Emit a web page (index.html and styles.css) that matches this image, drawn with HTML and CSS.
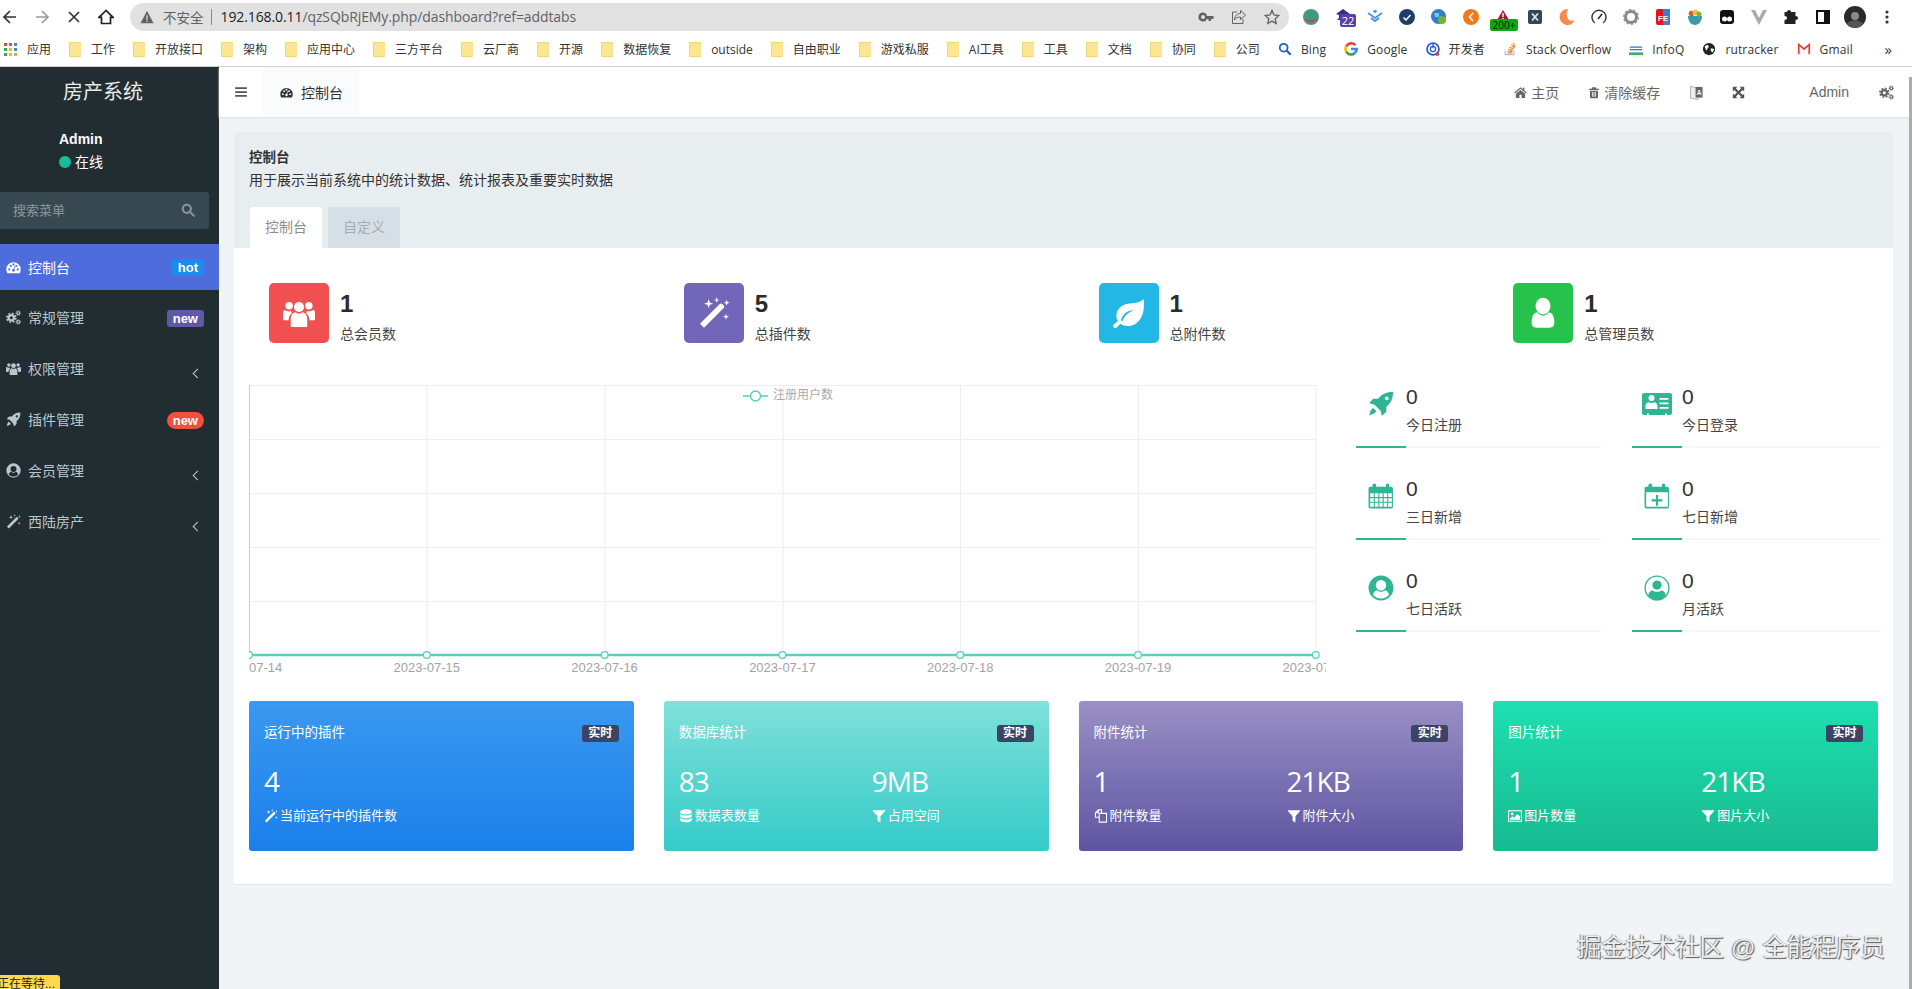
FILE: index.html
```html
<!DOCTYPE html>
<html lang="zh-CN">
<head>
    <meta charset="UTF-8">
    <meta name="viewport" content="width=device-width, initial-scale=1.0">
    <title>房产系统 - 控制台</title>
    <link rel="stylesheet" href="styles.css">
</head>
<body>
    <!-- icon sprite -->
    <svg class="sprite" xmlns="http://www.w3.org/2000/svg">
        <symbol id="i-dash" viewBox="0 0 24 24"><path fill-rule="evenodd" d="M12 3.5A11.5 11.5 0 0 0 .5 15c0 2.2.6 4.2 1.6 6h19.8a11.5 11.5 0 0 0 1.6-6A11.5 11.5 0 0 0 12 3.5zM3.5 15a1.7 1.7 0 1 0 3.4 0 1.7 1.7 0 1 0-3.4 0zM5.8 9.5a1.7 1.7 0 1 0 3.4 0 1.7 1.7 0 1 0-3.4 0zM10.3 7a1.7 1.7 0 1 0 3.4 0 1.7 1.7 0 1 0-3.4 0zM14.8 9.5a1.7 1.7 0 1 0 3.4 0 1.7 1.7 0 1 0-3.4 0zM17.1 15a1.7 1.7 0 1 0 3.4 0 1.7 1.7 0 1 0-3.4 0zM9.7 16.5a2.3 2.3 0 0 0 4.6 0c0-.8-.4-1.5-1-1.9L15 9.5l-.7-.2-2.4 4.9a2.3 2.3 0 0 0-2.2 2.3z"/></symbol>
        <symbol id="i-cogs" viewBox="0 0 24 24"><g fill="none" stroke="currentColor"><circle cx="8.5" cy="12.5" r="4.2" stroke-width="3.6"/><circle cx="8.5" cy="12.5" r="7" stroke-width="2.8" stroke-dasharray="2.9 2.6"/><circle cx="19.5" cy="5" r="2.2" stroke-width="1.8"/><circle cx="19.5" cy="5" r="3.6" stroke-width="1.6" stroke-dasharray="1.4 1.43"/><circle cx="19.5" cy="19" r="2.2" stroke-width="1.8"/><circle cx="19.5" cy="19" r="3.6" stroke-width="1.6" stroke-dasharray="1.4 1.43"/></g></symbol>
        <symbol id="i-users" viewBox="0 0 24 24"><circle cx="12" cy="7.5" r="3.8"/><circle cx="4.6" cy="6.5" r="2.8"/><circle cx="19.4" cy="6.5" r="2.8"/><path d="M5.8 21.5v-4.5c0-3.3 1.7-5.3 3.5-5.5.7.6 1.7 1 2.7 1s2-.4 2.7-1c1.8.2 3.5 2.2 3.5 5.5v4.5c0 .6-.5 1-1 1H6.8c-.5 0-1-.4-1-1z"/><path d="M0 11.5c0-1 .6-1.8 1.5-1.8.8.7 1.9 1.1 3 1.1.6 0 1.2-.1 1.7-.3-.2.8.1 1.3.5 1.7-1.5 1-2.5 3-2.5 5.3H1c-.6 0-1-.4-1-1z"/><path d="M24 11.5c0-1-.6-1.8-1.5-1.8-.8.7-1.9 1.1-3 1.1-.6 0-1.2-.1-1.7-.3.2.8-.1 1.3-.5 1.7 1.5 1 2.5 3 2.5 5.3H23c.6 0 1-.4 1-1z"/></symbol>
        <symbol id="i-rocket" viewBox="0 0 24 24"><path fill-rule="evenodd" d="M23 1c-5.5-.3-10.2 1.7-13.7 6.2H4.8L1 11.3l4.7 1.1 5.9 5.9 1.2 4.7 4.1-3.800v-4.500C21.300 11.200 23.300 6.500 23 1zM15.500 6.800a1.800 1.800 0 1 0 3.600 0 1.800 1.800 0 1 0-3.600 0z"/><path d="M4.700 15.700c-1.700 1-2.900 3.200-3.500 6.600 3.400-.6 5.600-1.800 6.600-3.500z"/></symbol>
        <symbol id="i-ucircle" viewBox="0 0 24 24"><path fill-rule="evenodd" d="M12 .5a11.500 11.500 0 1 0 0 23 11.500 11.500 0 0 0 0-23zM7.200 9.500a4.800 4.800 0 1 0 9.600 0 4.800 4.800 0 1 0-9.600 0zM4.500 18.300c.6-2.400 2-3.900 3.700-4.300 1 .9 2.400 1.400 3.800 1.400s2.800-.5 3.800-1.400c1.700.4 3.100 1.900 3.700 4.300-1.800 2.100-4.500 3.400-7.500 3.400s-5.700-1.300-7.500-3.400z"/></symbol>
        <symbol id="i-uring" viewBox="0 0 24 24"><circle cx="12" cy="12" r="11" fill="none" stroke="currentColor" stroke-width="1.2"/><circle cx="12" cy="9.3" r="4.3"/><path d="M3.800 18.700c.6-2.600 2-4.200 4-4.700 1 1 2.600 1.500 4.200 1.500s3.200-.5 4.200-1.500c2 .5 3.400 2.100 4 4.700-1.900 2.800-4.900 4.500-8.200 4.500s-6.300-1.700-8.200-4.500z"/></symbol>
        <symbol id="i-magic" viewBox="0 0 24 24"><path d="M4.500 23 1.500 20 16.300 5.200c.5-.5 1.300-.5 1.800 0l1.200 1.200c.5.500.5 1.300 0 1.800z"/><path d="M8 1.500l.8 2.700 2.700.8-2.700.8L8 8.500l-.8-2.700L4.500 5l2.700-.8zM14 0l.5 1.800 1.500.5-1.500.5-.5 1.700-.5-1.700-1.500-.5 1.500-.5zM21.500 2l.6 1.700 1.700.6-1.700.6-.6 1.600-.6-1.600-1.700-.6 1.700-.6zM21 12.500l.6 1.700 1.700.6-1.700.6-.6 1.600-.6-1.600-1.700-.6 1.700-.6z"/></symbol>
        <symbol id="i-search" viewBox="0 0 24 24"><circle cx="10" cy="10" r="7" fill="none" stroke="currentColor" stroke-width="3.4"/><path d="M15 17.500l2.500-2.500 6 6c.6.700.6 1.700 0 2.300-.7.600-1.700.6-2.300 0z"/></symbol>
        <symbol id="i-home" viewBox="0 0 24 24"><path d="M12 2.500.5 12l1.400 1.700L12 5.300l10.100 8.400 1.400-1.700-4.500-3.700V3h-3v3z"/><path d="M12 7.300 3.500 14.300V21c0 .6.400 1 1 1h5.500v-6h4v6h5.500c.6 0 1-.4 1-1v-6.700z"/></symbol>
        <symbol id="i-trash" viewBox="0 0 24 24"><path fill-rule="evenodd" d="M8.500 1.500h7l1.400 3H21c.6 0 1 .4 1 1v1.500H2V5.500c0-.6.400-1 1-1h4.100zM4 8.500h16V21c0 1.400-1 2.500-2.200 2.500H6.200C5 23.500 4 22.400 4 21zM8 11v9.500h1.500V11zM11.200 11v9.500h1.600V11zM14.500 11v9.500H16V11z"/></symbol>
        <symbol id="i-expand" viewBox="0 0 24 24"><path d="M1.500 1.500h8.500L7.200 4.300 12 9.100l4.800-4.800L14 1.500h8.500V10l-2.800-2.800L14.900 12l4.800 4.800 2.800-2.800v8.500H14l2.800-2.800L12 14.900l-4.800 4.800L10 22.500H1.500V14l2.800 2.800L9.100 12 4.300 7.200 1.500 10z"/></symbol>
        <symbol id="i-bars" viewBox="0 0 24 24"><path d="M2 4h20v3H2zM2 10.500h20v3H2zM2 17h20v3H2z"/></symbol>
        <symbol id="i-db" viewBox="0 0 24 24"><ellipse cx="12" cy="5" rx="10" ry="4.500"/><path d="M2 8c1.500 2 5.500 3 10 3s8.500-1 10-3v4c0 2.300-4.500 4-10 4S2 14.300 2 12z"/><path d="M2 15c1.500 2 5.500 3 10 3s8.500-1 10-3v4c0 2.300-4.500 4-10 4S2 21.300 2 19z"/></symbol>
        <symbol id="i-filter" viewBox="0 0 24 24"><path d="M1.500 2h21v1.500l-8 9V23l-5-3v-7.500l-8-9z"/></symbol>
        <symbol id="i-files" viewBox="0 0 24 24"><path fill="none" stroke="currentColor" stroke-width="1.800" d="M9 14H2.500V6.500L7.500 1.500H13V7M9 7.500h5.500L21.500 7.500V22.500H9z"/><path fill="none" stroke="currentColor" stroke-width="1.800" d="M7.500 1.500v5h-5"/></symbol>
        <symbol id="i-pic" viewBox="0 0 24 24"><rect x="1" y="3" width="22" height="18" fill="none" stroke="currentColor" stroke-width="1.800"/><circle cx="7" cy="8.500" r="2.300"/><path d="M3.500 18.500v-2.500l4-3.500 2.500 2.500 6-6.500 4.500 4.500v5.500z"/></symbol>
        <symbol id="i-leaf" viewBox="0 0 24 24"><path fill-rule="evenodd" d="M23 1.500c.5 6.500.5 14-6 18.500-4 2.500-8.500 2-11.500 0L2.800 22.800c-.6.600-1.600.6-2.200 0-.6-.6-.6-1.600 0-2.200L3.700 18C1.500 14.500 2.500 9 7 6.500c5-2.800 12-.7 16-5zM6 17.400l1 1c1.500-4.500 4.500-7 9-8.400-5-.2-8.700 2.500-10 7.400z"/></symbol>
        <symbol id="i-user" viewBox="0 0 24 24"><ellipse cx="12" cy="6.800" rx="5.600" ry="6.300"/><path d="M3.500 19.500c0-4.500 1.300-7.500 4-8 1 1.400 2.700 2.500 4.500 2.500s3.500-1.100 4.500-2.500c2.700.5 4 3.500 4 8 0 2.200-1.300 3.500-3.500 3.500H7c-2.200 0-3.500-1.300-3.500-3.500z"/></symbol>
        <symbol id="i-cal" viewBox="0 0 24 24"><path fill-rule="evenodd" d="M6 .5c.8 0 1.500.7 1.500 1.500v1.500h9V2c0-.8.700-1.500 1.500-1.500s1.500.7 1.500 1.500v1.500h2c.8 0 1.500.7 1.500 1.500v17c0 .8-.7 1.500-1.500 1.500H2c-.8 0-1.500-.7-1.500-1.500V5c0-.8.700-1.500 1.500-1.500h2V2C4.500 1.200 5.200.5 6 .5zM2 9.500V13h3.300V9.500zM6.300 9.500V13h3.200V9.500zM10.500 9.500V13h3V9.500zM14.500 9.500V13h3.200V9.500zM18.700 9.500V13H22V9.500zM2 14v3.300h3.300V14zM6.300 14v3.300h3.200V14zM10.500 14v3.300h3V14zM14.500 14v3.300h3.200V14zM18.700 14v3.300H22V14zM2 18.300V22h3.300v-3.700zM6.300 18.300V22h3.200v-3.700zM10.500 18.300V22h3v-3.700zM14.500 18.300V22h3.200v-3.700zM18.700 18.300V22H22v-3.700z"/></symbol>
        <symbol id="i-calplus" viewBox="0 0 24 24"><path fill-rule="evenodd" d="M6 .5c.8 0 1.500.7 1.500 1.500v1.500h9V2c0-.8.700-1.500 1.500-1.500s1.500.7 1.500 1.500v1.500h2c.8 0 1.500.7 1.500 1.500v17c0 .8-.7 1.500-1.500 1.500H2c-.8 0-1.500-.7-1.500-1.500V5c0-.8.700-1.500 1.500-1.500h2V2C4.500 1.200 5.200.5 6 .5zM2 8.500V22h20V8.500z"/><path d="M11 11h2v4h4v2h-4v4h-2v-4H7v-2h4z"/></symbol>
        <symbol id="i-idcard" viewBox="0 0 30 24"><path fill-rule="evenodd" d="M2 1h26c1 0 2 1 2 2v18c0 1-1 2-2 2h-3v-1.500h-2V23H7v-1.500H5V23H2c-1 0-2-1-2-2V3c0-1 1-2 2-2zM6.500 6a3 3 0 1 0 6 0 3 3 0 1 0-6 0zM3.500 17h12v-2.500c0-2.500-1.500-4-3-4.300-.8.600-1.800.8-3 .8s-2.200-.2-3-.8c-1.500.3-3 1.800-3 4.300zM17.500 6v1.800h9V6zM17.500 10.500v1.800h9v-1.800zM17.500 15v1.800h9V15z"/></symbol>
    </svg>

    <!-- browser toolbar -->
    <div class="toolbar">
        <div class="nav-btns">
            <svg viewBox="0 0 16 16" fill="none" stroke="#333" stroke-width="1.7"><path d="M14 8H2.500M8 2 2 8l6 6"/></svg>
            <svg viewBox="0 0 16 16" fill="none" stroke="#999" stroke-width="1.7"><path d="M2 8h11.500M8 2l6 6-6 6"/></svg>
            <svg viewBox="0 0 16 16" fill="none" stroke="#333" stroke-width="1.7"><path d="M3 3l10 10M13 3 3 13"/></svg>
            <svg viewBox="0 0 16 16" fill="none" stroke="#222" stroke-width="1.7"><path d="M8 1.500 1 8.300h2.500V14.500h9V8.300H15z"/></svg>
        </div>
        <div class="addr">
            <svg class="addr-warn" viewBox="0 0 16 16"><path fill="#5f6368" d="M8 1 .5 15h15z"/><path fill="#e0e0e0" d="M7.300 6h1.400v5H7.300zM7.300 12h1.400v1.400H7.300z"/></svg>
            <span class="addr-insecure">不安全</span>
            <span class="addr-sep"></span>
            <span class="addr-url"><b>192.168.0.11</b>/qzSQbRjEMy.php/dashboard?ref=addtabs</span>
            <span class="addr-tools">
                <svg viewBox="0 0 16 16" fill="#5f6368"><path fill-rule="evenodd" d="M5 3.500a4.500 4.500 0 1 0 4 6.500h1.500v2H13v-2h2.500V7H9a4.500 4.500 0 0 0-4-3.500zM3 8a2 2 0 1 0 4 0 2 2 0 1 0-4 0z"/></svg>
                <svg viewBox="0 0 16 16" fill="none" stroke="#5f6368" stroke-width="1"><path d="M6 3H1.500v11.500H12V10M9.500 1.500 14.500 6l-5 4.500V8C6.500 8 4.500 9 3.500 11c0-4 2.500-6.500 6-6.500z"/></svg>
                <svg viewBox="0 0 16 16" fill="none" stroke="#5f6368" stroke-width="1.3"><path d="M8 1.500l2 4.500 4.800.5-3.600 3.200 1 4.800L8 12.100l-4.200 2.400 1-4.800L1.200 6.500 6 6z"/></svg>
            </span>
        </div>
        <div class="exts">
            <svg viewBox="0 0 16 16"><circle cx="8" cy="8" r="8" fill="#5a8f7a"/><path fill="#2f9e8f" d="M3 3h10v5H3z"/><path fill="#a04f4a" d="M2 9c2 3 10 3 12 0-1 5-11 5-12 0z"/></svg>
            <span class="ext-wrap"><svg viewBox="0 0 16 16"><path fill="#3b2a8c" d="M8 0l7 5-3 1v3l2 2H2l2-2V6L1 5z"/></svg><span class="ext-badge ext-badge-purple">22</span></span>
            <svg viewBox="0 0 16 16" fill="none" stroke="#4a90e2" stroke-width="1.8"><path d="M1 4l7 5 7-5M4 9l4 3 4-3M6.500 1.500 8 3l1.500-1.500"/></svg>
            <svg viewBox="0 0 16 16"><circle cx="8" cy="8" r="8" fill="#1d3f66"/><path fill="none" stroke="#fff" stroke-width="1.5" d="M4.500 8.500l2.500 2.500 4.500-5"/></svg>
            <svg viewBox="0 0 16 16"><circle cx="7.500" cy="7.500" r="7.500" fill="#2f80c8"/><circle cx="11" cy="11" r="4" fill="#6db33f"/><path fill="#7ec2ea" d="M3 4h5v4H4z"/></svg>
            <svg viewBox="0 0 16 16"><circle cx="8" cy="8" r="8" fill="#f07a1a"/><path fill="none" stroke="#fff" stroke-width="1.5" d="M10 4 6.500 8 10 12"/></svg>
            <span class="ext-wrap"><svg viewBox="0 0 16 16"><path fill="#a61c2e" d="M8 1l6 10H2z"/><path fill="#fff" d="M7.300 4h1.400v4H7.300zM7.300 9h1.400v1.300H7.300z"/></svg><span class="ext-badge ext-badge-green">200+</span></span>
            <svg viewBox="0 0 16 16"><rect x="1" y="1" width="14" height="14" rx="2" fill="#37474f"/><path fill="none" stroke="#dfe6e9" stroke-width="1.8" d="M5 4.500l6 7M11 4.500l-6 7"/></svg>
            <svg viewBox="0 0 16 16"><path fill="#f58a4b" d="M9 0A8 8 0 1 0 16 11C11 14 5 9 9 0z"/></svg>
            <svg viewBox="0 0 16 16" fill="none" stroke="#333" stroke-width="1.4"><path d="M4 14A7 7 0 1 1 12 14"/><path stroke-width="1.8" d="M7 10l4-5"/></svg>
            <svg viewBox="0 0 16 16"><circle cx="8" cy="8" r="5.500" fill="none" stroke="#888" stroke-width="3"/><circle cx="8" cy="8" r="7.200" fill="none" stroke="#999" stroke-width="1.6" stroke-dasharray="2.5 2"/></svg>
            <svg viewBox="0 0 16 16"><rect x="1" width="14" height="16" rx="2" fill="#e0161c"/><rect x="8" y="0" width="7" height="16" rx="1" fill="#3a7bd5"/><text class="ext-fe" x="8" y="11.500" text-anchor="middle">FE</text></svg>
            <svg viewBox="0 0 16 16"><path fill="#3c9aa8" d="M1 7h14c0 5-3 9-7 9s-7-4-7-9z"/><circle cx="4.500" cy="4.500" r="2.800" fill="#d8553f"/><circle cx="8.500" cy="3.500" r="3" fill="#f2c230"/><circle cx="12" cy="5" r="2.500" fill="#7cb342"/></svg>
            <svg viewBox="0 0 16 16"><rect x="1" y="1" width="14" height="14" rx="3" fill="#111"/><circle cx="5.500" cy="10" r="2.500" fill="#fff"/><circle cx="10.500" cy="10" r="2.500" fill="#fff"/></svg>
            <svg viewBox="0 0 16 16"><path fill="#aaa" d="M0 1h4l4 8 4-8h4L8 16z"/></svg>
            <svg viewBox="0 0 16 16"><path fill="#222" d="M6 1c1.300 0 2 1 2 2h4.500v4c1.500 0 2.500.8 2.500 2s-1 2-2.500 2v4H1.500v-4c1.500 0 2.500-.8 2.500-2S3 7 1.500 7V3H4c0-1 .7-2 2-2z"/></svg>
            <svg viewBox="0 0 16 16"><path fill-rule="evenodd" fill="#111" d="M1 1h14v14H1zM3 3v10h6V3z"/></svg>
            <svg viewBox="0 0 22 22" class="ext-avatar"><circle cx="11" cy="11" r="11" fill="#2a2a2a"/><circle cx="11" cy="10" r="4" fill="#8a8a8a"/><path fill="#555" d="M3 18c3-5 13-5 16 0-4 5-12 5-16 0z"/></svg>
            <svg viewBox="0 0 16 16" fill="#333"><circle cx="8" cy="3" r="1.600"/><circle cx="8" cy="8" r="1.600"/><circle cx="8" cy="13" r="1.600"/></svg>
        </div>
    </div>

    <!-- bookmarks bar -->
    <div class="bookmarks">
        <a class="bm"><svg class="bm-apps" viewBox="0 0 13 13"><path fill="#e8453c" d="M0 0h3v3H0z"/><path fill="#e8453c" d="M5 0h3v3H5z"/><path fill="#4285f4" d="M10 0h3v3h-3z"/><path fill="#34a853" d="M0 5h3v3H0z"/><path fill="#fbbc05" d="M5 5h3v3H5z"/><path fill="#4285f4" d="M10 5h3v3h-3z"/><path fill="#34a853" d="M0 10h3v3H0z"/><path fill="#fbbc05" d="M5 10h3v3H5z"/><path fill="#e8a33c" d="M10 10h3v3h-3z"/></svg>应用</a>
        <a class="bm"><i class="folder"></i>工作</a>
        <a class="bm"><i class="folder"></i>开放接口</a>
        <a class="bm"><i class="folder"></i>架构</a>
        <a class="bm"><i class="folder"></i>应用中心</a>
        <a class="bm"><i class="folder"></i>三方平台</a>
        <a class="bm"><i class="folder"></i>云厂商</a>
        <a class="bm"><i class="folder"></i>开源</a>
        <a class="bm"><i class="folder"></i>数据恢复</a>
        <a class="bm"><i class="folder"></i>outside</a>
        <a class="bm"><i class="folder"></i>自由职业</a>
        <a class="bm"><i class="folder"></i>游戏私服</a>
        <a class="bm"><i class="folder"></i>AI工具</a>
        <a class="bm"><i class="folder"></i>工具</a>
        <a class="bm"><i class="folder"></i>文档</a>
        <a class="bm"><i class="folder"></i>协同</a>
        <a class="bm"><i class="folder"></i>公司</a>
        <a class="bm bm-site"><svg viewBox="0 0 16 16"><circle cx="6.500" cy="6.500" r="4.500" fill="none" stroke="#1a5fc4" stroke-width="2"/><path stroke="#1a5fc4" stroke-width="2.4" d="M10 10l4.500 4.500"/></svg>Bing</a>
        <a class="bm bm-site"><svg viewBox="0 0 16 16" fill="none" stroke-width="3"><path stroke="#ea4335" d="M13 3.500A6.500 6.500 0 0 0 2.500 5"/><path stroke="#fbbc05" d="M2.500 5a6.500 6.500 0 0 0 0 6"/><path stroke="#34a853" d="M2.500 11a6.500 6.500 0 0 0 10 1.500"/><path stroke="#4285f4" d="M12.500 12.500c1.200-1 1.800-2.500 2-4.500H8"/></svg>Google</a>
        <a class="bm bm-site"><svg viewBox="0 0 16 16"><circle cx="8" cy="8" r="6.800" fill="none" stroke="#2a5bd7" stroke-width="2"/><circle cx="8" cy="8" r="3" fill="none" stroke="#2a5bd7" stroke-width="1.5"/><path stroke="#2a5bd7" stroke-width="1.5" d="M8 1v6"/><circle cx="13" cy="14" r="2" fill="#e53935"/></svg>开发者</a>
        <a class="bm bm-site"><svg viewBox="0 0 16 16" fill="none" stroke="#e8893a" stroke-width="1.4"><path stroke="#bcbbbb" d="M2.500 10v4.500h10V10"/><path d="M5 12.500h5.500M5.200 10.300l5.400.7M6 8l5 1.800M7.500 5.500l4.300 3M9.800 3l3 4.200M12.300 1l1 5"/></svg>Stack Overflow</a>
        <a class="bm bm-site"><svg viewBox="0 0 16 16"><path fill="#1b7fcc" d="M0 12h16v1.500H0z"/><path fill="#3eb34f" d="M0 13.500h16V15H0z"/><path fill="#1b7fcc" d="M1 5h14v1.500H1zM1 8h14v1.500H1z"/></svg>InfoQ</a>
        <a class="bm bm-site"><svg viewBox="0 0 16 16"><circle cx="8" cy="8" r="7" fill="#222"/><path fill="#fff" d="M3 5l3-2 2 2-2 3-1 2zM10 7l4 1-2 4-2-2z"/></svg>rutracker</a>
        <a class="bm bm-site"><svg viewBox="0 0 16 16" fill="none" stroke-width="2"><path stroke="#ea4335" d="M2 14V3l6 5 6-5v11"/></svg>Gmail</a>
        <span class="bm-more">»</span>
    </div>

    <div class="app">
        <aside class="sidebar">
            <div class="brand">房产系统</div>
            <div class="user-panel">
                <div class="user-name">Admin</div>
                <div class="user-state"><i class="dot"></i>在线</div>
            </div>
            <div class="side-search">
                <span>搜索菜单</span>
                <svg class="ico"><use href="#i-search"/></svg>
            </div>
            <ul class="menu">
                <li class="menu-item active"><svg class="ico"><use href="#i-dash"/></svg><span class="menu-text">控制台</span><span class="tag tag-blue">hot</span></li>
                <li class="menu-item"><svg class="ico"><use href="#i-cogs"/></svg><span class="menu-text">常规管理</span><span class="tag tag-purple">new</span></li>
                <li class="menu-item"><svg class="ico"><use href="#i-users"/></svg><span class="menu-text">权限管理</span><i class="chev"></i></li>
                <li class="menu-item"><svg class="ico"><use href="#i-rocket"/></svg><span class="menu-text">插件管理</span><span class="tag tag-red">new</span></li>
                <li class="menu-item"><svg class="ico"><use href="#i-ucircle"/></svg><span class="menu-text">会员管理</span><i class="chev"></i></li>
                <li class="menu-item"><svg class="ico"><use href="#i-magic"/></svg><span class="menu-text">西陆房产</span><i class="chev"></i></li>
            </ul>
        </aside>

        <main class="main">
            <header class="topbar">
                <svg class="top-bars"><use href="#i-bars"/></svg>
                <div class="top-tab"><svg class="ico"><use href="#i-dash"/></svg>控制台</div>
                <div class="top-right">
                    <a class="top-link top-home"><svg class="ico"><use href="#i-home"/></svg>主页</a>
                    <a class="top-link top-cache"><svg class="ico"><use href="#i-trash"/></svg>清除缓存</a>
                    <svg class="top-lang" viewBox="0 0 14 16"><path fill="#eee" stroke="#999" stroke-width=".8" d="M.5 1.500l8 1.500v12.500l-8-1.500z"/><path fill="#666" d="M6 2h7.500v11.500H6z"/><text class="lang-a" x="9.800" y="10.500" text-anchor="middle">A</text></svg>
                    <svg class="top-expand"><use href="#i-expand"/></svg>
                    <a class="top-admin">Admin</a>
                    <svg class="top-cogs"><use href="#i-cogs"/></svg>
                </div>
            </header>

            <div class="content">
                <section class="panel">
                    <div class="panel-heading">
                        <div class="panel-title">控制台</div>
                        <div class="panel-desc">用于展示当前系统中的统计数据、统计报表及重要实时数据</div>
                        <div class="tabs">
                            <span class="tab active">控制台</span>
                            <span class="tab">自定义</span>
                        </div>
                    </div>
                    <div class="panel-body">
                        <div class="stat-row">
                            <div class="stat">
                                <div class="stat-icon bg-red"><svg><use href="#i-users"/></svg></div>
                                <div><div class="stat-num">1</div><div class="stat-label">总会员数</div></div>
                            </div>
                            <div class="stat">
                                <div class="stat-icon bg-purple"><svg><use href="#i-magic"/></svg></div>
                                <div><div class="stat-num">5</div><div class="stat-label">总插件数</div></div>
                            </div>
                            <div class="stat">
                                <div class="stat-icon bg-sky"><svg><use href="#i-leaf"/></svg></div>
                                <div><div class="stat-num">1</div><div class="stat-label">总附件数</div></div>
                            </div>
                            <div class="stat">
                                <div class="stat-icon bg-green"><svg><use href="#i-user"/></svg></div>
                                <div><div class="stat-num">1</div><div class="stat-label">总管理员数</div></div>
                            </div>
                        </div>

                        <div class="mid-row">
                            <svg class="chart" width="1077" height="296" viewBox="0 0 1077 296">
                                <g stroke="#eeeeee" stroke-width="1">
                                    <path d="M0 .5H1067M0 54.500H1067M0 108.500H1067M0 162.500H1067M0 216.500H1067"/>
                                    <path d="M178 0V270M356 0V270M534 0V270M711.500 0V270M889.500 0V270M1067 0V270"/>
                                </g>
                                <path stroke="#cfcfcf" d="M.5 0V270"/>
                                <path stroke="#5cd0b8" stroke-width="2.5" d="M0 270H1067"/>
                                <g fill="#fff" stroke="#4fd2b8" stroke-width="1.2">
                                    <circle cx="0" cy="270" r="3.400"/><circle cx="177.800" cy="270" r="3.400"/><circle cx="355.600" cy="270" r="3.400"/><circle cx="533.400" cy="270" r="3.400"/><circle cx="711.200" cy="270" r="3.400"/><circle cx="889" cy="270" r="3.400"/><circle cx="1066.800" cy="270" r="3.400"/>
                                </g>
                                <g class="chart-labels" text-anchor="middle">
                                    <text x="0" y="287">2023-07-14</text><text x="177.800" y="287">2023-07-15</text><text x="355.600" y="287">2023-07-16</text><text x="533.400" y="287">2023-07-17</text><text x="711.200" y="287">2023-07-18</text><text x="889" y="287">2023-07-19</text><text x="1066.800" y="287">2023-07-20</text>
                                </g>
                                <path stroke="#4fd2b8" stroke-width="1.5" d="M494 11H519"/>
                                <circle cx="506.500" cy="11" r="5" fill="#fff" stroke="#4fd2b8" stroke-width="1.3"/>
                                <text class="chart-legend" x="524" y="13.500">注册用户数</text>
                            </svg>

                            <div class="mini-grid">
                                <div class="mini"><div class="mini-main"><svg class="mini-icon"><use href="#i-rocket"/></svg><div><div class="mini-num">0</div><div class="mini-label">今日注册</div></div></div><div class="track"><div class="track-fill"></div></div></div>
                                <div class="mini"><div class="mini-main"><svg class="mini-icon mini-icon-wide" viewBox="0 0 30 24"><use href="#i-idcard"/></svg><div><div class="mini-num">0</div><div class="mini-label">今日登录</div></div></div><div class="track"><div class="track-fill"></div></div></div>
                                <div class="mini"><div class="mini-main"><svg class="mini-icon"><use href="#i-cal"/></svg><div><div class="mini-num">0</div><div class="mini-label">三日新增</div></div></div><div class="track"><div class="track-fill"></div></div></div>
                                <div class="mini"><div class="mini-main"><svg class="mini-icon"><use href="#i-calplus"/></svg><div><div class="mini-num">0</div><div class="mini-label">七日新增</div></div></div><div class="track"><div class="track-fill"></div></div></div>
                                <div class="mini"><div class="mini-main"><svg class="mini-icon"><use href="#i-ucircle"/></svg><div><div class="mini-num">0</div><div class="mini-label">七日活跃</div></div></div><div class="track"><div class="track-fill"></div></div></div>
                                <div class="mini"><div class="mini-main"><svg class="mini-icon"><use href="#i-uring"/></svg><div><div class="mini-num">0</div><div class="mini-label">月活跃</div></div></div><div class="track"><div class="track-fill"></div></div></div>
                            </div>
                        </div>

                        <div class="card-row">
                            <div class="card card-blue">
                                <div class="card-head"><span>运行中的插件</span><span class="card-tag">实时</span></div>
                                <div class="card-cols">
                                    <div><div class="card-num">4</div><div class="card-sub"><svg class="ico"><use href="#i-magic"/></svg>当前运行中的插件数</div></div>
                                </div>
                            </div>
                            <div class="card card-teal">
                                <div class="card-head"><span>数据库统计</span><span class="card-tag">实时</span></div>
                                <div class="card-cols">
                                    <div><div class="card-num">83</div><div class="card-sub"><svg class="ico"><use href="#i-db"/></svg>数据表数量</div></div>
                                    <div><div class="card-num">9MB</div><div class="card-sub"><svg class="ico"><use href="#i-filter"/></svg>占用空间</div></div>
                                </div>
                            </div>
                            <div class="card card-violet">
                                <div class="card-head"><span>附件统计</span><span class="card-tag">实时</span></div>
                                <div class="card-cols">
                                    <div><div class="card-num">1</div><div class="card-sub"><svg class="ico"><use href="#i-files"/></svg>附件数量</div></div>
                                    <div><div class="card-num">21KB</div><div class="card-sub"><svg class="ico"><use href="#i-filter"/></svg>附件大小</div></div>
                                </div>
                            </div>
                            <div class="card card-mint">
                                <div class="card-head"><span>图片统计</span><span class="card-tag">实时</span></div>
                                <div class="card-cols">
                                    <div><div class="card-num">1</div><div class="card-sub"><svg class="ico"><use href="#i-pic"/></svg>图片数量</div></div>
                                    <div><div class="card-num">21KB</div><div class="card-sub"><svg class="ico"><use href="#i-filter"/></svg>图片大小</div></div>
                                </div>
                            </div>
                        </div>
                    </div>
                </section>
            </div>
        </main>
    </div>

    <div class="scroll-strip"></div>
    <div class="status-tip">正在等待...</div>
    <div class="watermark">掘金技术社区 @ 全能程序员</div>
</body>
</html>
```

FILE: styles.css
```css
* { box-sizing: border-box; }
html, body { margin: 0; height: 100%; }
body { position: relative; height: 989px; overflow: hidden; display: flex; flex-direction: column; background: #f1f4f6; color: #333; font-family: "Liberation Sans", "Noto Sans CJK SC", sans-serif; font-size: 14px; }
ul { list-style: none; margin: 0; padding: 0; }
.sprite { display: none; }
.ico { width: 14px; height: 14px; fill: currentColor; flex: none; }

/* browser chrome */
.toolbar { height: 33px; flex: none; display: flex; align-items: center; padding: 0 17px 0 2px; background: #fff; font-family: "Open Sans", "Noto Sans CJK SC", sans-serif; }
.nav-btns { display: flex; gap: 16px; flex: none; }
.nav-btns svg { width: 16px; height: 16px; }
.addr { flex: 1; height: 28px; margin: 0 14px 0 16px; padding: 0 9px 0 10px; display: flex; align-items: center; background: #e1e1e1; border-radius: 14px; font-size: 14px; color: #5f6368; }
.addr-warn { width: 14px; height: 14px; margin-right: 9px; }
.addr-insecure { font-size: 13.5px; }
.addr-sep { width: 1px; height: 16px; background: #8a8a8a; margin: 0 9px 0 7px; }
.addr-url { letter-spacing: -.1px; }
.addr-url b { font-weight: 400; color: #202124; }
.addr-tools { margin-left: auto; display: flex; gap: 17px; }
.addr-tools svg { width: 16px; height: 16px; }
.exts { display: flex; gap: 16px; align-items: center; flex: none; }
.exts > svg, .ext-wrap > svg { width: 16px; height: 16px; display: block; }
.exts > .ext-avatar { width: 22px; height: 22px; margin: 0 -3px; }
.ext-wrap { position: relative; width: 16px; height: 16px; }
.ext-badge { position: absolute; font-size: 11px; line-height: 13px; text-align: center; }
.ext-badge-purple { left: 5px; top: 5px; width: 16px; background: #5b3fa8; color: #fff; border-radius: 2px; }
.ext-badge-green { left: -5px; top: 10px; width: 28px; height: 12px; background: #0ca80c; color: #111; border-radius: 2px; font-size: 10px; line-height: 12px; }
.ext-fe { font: bold 8px "Liberation Sans", sans-serif; fill: #fff; }

.bookmarks { height: 34px; flex: none; display: flex; align-items: center; gap: 18px; padding: 0 0 1px 4px; background: #fff; border-bottom: 1px solid #cfcfcf; font-family: "Open Sans", "Noto Sans CJK SC", sans-serif; font-size: 12px; color: #333; white-space: nowrap; }
.bm { display: flex; align-items: center; gap: 10px; }
.bm-apps { width: 13px; height: 13px; }
.folder { display: block; width: 12px; height: 15px; background: #fde594; border: 1px solid #f3d577; border-right-width: 0; border-radius: 1px; }
.bm-site { letter-spacing: .15px; }
.bm-site svg { width: 14px; height: 14px; margin-right: -1px; }
.bm-more { margin-left: auto; margin-right: 20px; font-size: 15px; }

.app { flex: 1; display: flex; min-height: 0; }

/* sidebar */
.sidebar { width: 219px; flex: none; background: #222d32; color: #b8c7ce; }
.brand { height: 50px; line-height: 50px; text-align: center; font-size: 20px; color: #fff; opacity: .9; padding-right: 13px; }
.user-panel { height: 75px; padding: 12px 0 0 59px; color: #fff; }
.user-name { font-weight: bold; line-height: 20px; }
.user-state { display: flex; align-items: center; gap: 4px; line-height: 20px; margin-top: 3px; }
.dot { width: 12px; height: 12px; border-radius: 50%; background: #18bc9c; }
.side-search { width: 209px; height: 37px; display: flex; align-items: center; justify-content: space-between; padding: 0 14px 2px 13px; background: #374850; border-radius: 0 3px 3px 0; font-size: 13px; color: #8a989e; }
.menu { margin-top: 15px; }
.menu-item { height: 46px; margin-bottom: 5px; display: flex; align-items: center; padding: 0 15px 0 7px; }
.menu-item .ico { width: 15px; height: 15px; margin-left: -1px; margin-top: -2px; }
.menu-text { margin-left: 7px; flex: 1; margin-top: -2px; }
.menu-item.active { background: #4e6cdb; color: #fff; }
.menu-item.active .menu-text, .menu-item.active .ico { margin-top: 0; }
.tag { font-size: 13px; font-weight: bold; line-height: 17px; padding: 0 6px; border-radius: 3px; color: #fff; }
.tag-blue { background: #1a8cee; }
.tag-purple { background: #5f58a6; }
.tag-red { background: #f0503c; border-radius: 9px; }
.chev { width: 7px; height: 7px; margin: 8px 3px 0 0; border-left: 1.5px solid #b8c7ce; border-bottom: 1.5px solid #b8c7ce; transform: rotate(45deg); }

/* main column */
.main { flex: 1; min-width: 0; display: flex; flex-direction: column; }
.topbar { height: 50px; flex: none; display: flex; align-items: center; background: #fff; box-shadow: 0 1px 2px #dcdfe2; color: #666; position: relative; }
.top-bars { width: 14px; height: 14px; margin-left: 15px; fill: #555; }
.top-tab { height: 50px; width: 96px; margin-left: 15px; display: flex; align-items: center; gap: 8px; padding-left: 17px; background: #fafbfc; color: #333; }
.top-tab .ico { width: 13px; height: 13px; }
.top-right { margin-left: auto; display: flex; align-items: center; margin-right: 18px; }
.top-link { display: flex; align-items: center; gap: 4px; }
.top-link .ico { width: 13px; height: 13px; fill: #666; }
.top-cache { margin-left: 29px; }
.top-cache .ico { width: 12px; height: 13px; }
.top-lang { width: 13px; height: 15px; margin-left: 30px; }
.lang-a { font: bold 7px "Liberation Sans", sans-serif; fill: #fff; }
.top-expand { width: 13px; height: 13px; margin-left: 29px; fill: #555; }
.top-admin { margin-left: 64px; color: #666; }
.top-cogs { width: 15px; height: 15px; margin-left: 30px; fill: #666; color: #666; }

.content { flex: 1; padding: 15px 19px 0 15px; min-height: 0; }
.panel { background: #fff; box-shadow: 0 1px 1px #e2e5e8; border-radius: 3px; height: 752px; }
.panel-heading { height: 116px; padding: 16px 15px 0 15px; background: #e8edf0; border-radius: 3px 3px 0 0; }
.panel-title { font-weight: bold; line-height: 20px; color: #333; font-size: 13.5px; }
.panel-desc { line-height: 20px; margin-top: 2px; }
.tabs { display: flex; gap: 6px; margin-top: 17px; padding-left: 1px; }
.tab { width: 72px; height: 41px; line-height: 41px; text-align: center; background: #d6dfe6; color: #a4adb4; }
.tab.active { background: #fff; color: #8d8d8d; border-radius: 3px 3px 0 0; }

.panel-body { padding: 35px 15px 0; }
.stat-row { display: grid; grid-template-columns: repeat(4, 1fr); margin: 0 -15px; }
.stat { display: flex; gap: 11px; padding-left: 35px; }
.stat-icon { width: 60px; height: 60px; border-radius: 5px; display: flex; align-items: center; justify-content: center; color: #fff; }
.stat-icon svg { width: 32px; height: 32px; fill: #fff; }
.bg-red { background: #f05050; }
.bg-purple { background: #7266ba; }
.bg-sky { background: #23b7e5; }
.bg-green { background: #27c24c; }
.stat-num { font-size: 24px; font-weight: bold; line-height: 30px; margin-top: 6px; color: #2b2b2b; }
.stat-label { line-height: 20px; margin-top: 5px; color: #444; }

.mid-row { display: flex; margin-top: 41px; height: 316px; }
.chart { flex: none; overflow: hidden; display: block; }
.chart-labels { font: 13px "Liberation Sans", sans-serif; fill: #a3a3a3; }
.chart-legend { font: 12px "Liberation Sans", "Noto Sans CJK SC", sans-serif; fill: #aaa; }

.mini-grid { margin-left: 30px; display: grid; grid-template-columns: 245px 249px; column-gap: 31px; row-gap: 29px; align-content: start; }
.mini { height: 63px; display: flex; flex-direction: column; justify-content: space-between; }
.mini-main { display: flex; }
.mini-icon { width: 26px; height: 26px; margin: 6px 12px 0 12px; fill: #2eb592; color: #2eb592; flex: none; }
.mini-icon-wide { width: 30px; margin: 6px 10px 0 10px; }
.mini-num { font-size: 21px; line-height: 24px; color: #333; }
.mini-label { line-height: 20px; margin-top: 6px; color: #444; }
.track { height: 2px; background: #f5f6f6; }
.track-fill { width: 50px; height: 2px; background: #2eb592; }

.card-row { display: grid; grid-template-columns: repeat(4, 1fr); gap: 30px; }
.card { height: 150px; padding: 22px 15px; border-radius: 3px; color: #fff; }
.card-blue { background: linear-gradient(#3a98f0, #1a80ea); }
.card-teal { background: linear-gradient(#80e0da, #34cbc8); }
.card-violet { background: linear-gradient(#9a90c5, #5d55a2); }
.card-mint { background: linear-gradient(#1de0b0, #18ba90); }
.card-head { display: flex; justify-content: space-between; align-items: center; line-height: 20px; font-size: 13.5px; }
.card-tag { width: 37px; height: 17px; line-height: 17px; text-align: center; font-size: 12px; font-weight: bold; background: #3b4464; border-radius: 3px; }
.card-cols { display: grid; grid-template-columns: 193px 1fr; margin-top: 18px; }
.card-num { font-family: "Open Sans", sans-serif; font-size: 28px; line-height: 40px; letter-spacing: -1px; }
.card-sub { display: flex; align-items: center; gap: 2px; line-height: 20px; margin-top: 5px; font-size: 13px; }
.card-sub .ico { width: 14px; height: 14px; color: #fff; }

/* overlays */
.scroll-strip { position: absolute; right: 0; top: 77px; bottom: 0; width: 3px; background: #a9aea9; }
.status-tip { position: absolute; left: 0; bottom: 0; width: 60px; height: 14px; padding-top: 1px; text-indent: -3px; background: #ffd84f; border-radius: 0 3px 0 0; font-size: 12px; line-height: 17px; color: #222; white-space: nowrap; overflow: hidden; }
.watermark { position: absolute; right: 27px; top: 932px; font-size: 24.5px; line-height: 32px; color: #eceef0; text-shadow: 1px 1px 1px #555, -1px 0 1px #888; white-space: nowrap; }
```
